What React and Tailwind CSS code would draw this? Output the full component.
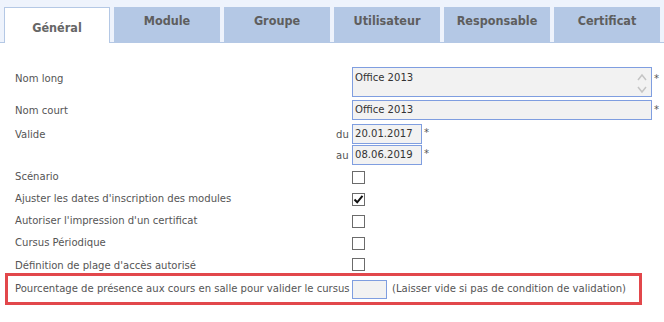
import React from 'react';

const TABS = ['Général', 'Module', 'Groupe', 'Utilisateur', 'Responsable', 'Certificat'];

const CHECKS = [
  { label: 'Scénario', checked: false },
  { label: "Ajuster les dates d'inscription des modules", checked: true },
  { label: "Autoriser l'impression d'un certificat", checked: false },
  { label: 'Cursus Périodique', checked: false },
];

const Checkbox = ({ checked }) => (
  <div className="w-[13px] h-[13px] border border-[#6b6b6b] bg-white flex items-center justify-center">
    {checked && (
      <svg width="11" height="11" viewBox="0 0 11 11">
        <path d="M1.5 5.5 L4.2 8.3 L9.5 1.8" fill="none" stroke="#111" strokeWidth="2" />
      </svg>
    )}
  </div>
);

const Star = () => <span className="ml-[2px] text-[#555] leading-none">*</span>;

export default function App() {
  return (
    <div className="w-[664px] h-[322px] bg-white text-[11.2px] text-[#555]" style={{ fontFamily: '"DejaVu Sans Condensed", "DejaVu Sans", sans-serif' }}>
      {/* Tabs */}
      <div className="h-[43px] bg-[#eef3fc] border-b border-[#b4c8e5] flex items-end gap-[4px] pl-[4px]">
        {TABS.map((t, i) =>
          i === 0 ? (
            <div key={t} className="w-[106px] h-[36px] -mb-px bg-white border border-b-0 border-[#b4c8e5] flex items-center justify-center pt-[6px] font-bold text-[12.5px] text-[#666]">
              {t}
            </div>
          ) : (
            <div key={t} className="w-[106px] h-[35px] bg-[#b4c8e5] flex justify-center pt-[5px] font-bold text-[12.5px] text-[#5e5e5e]">
              {t}
            </div>
          )
        )}
      </div>

      <div className="pl-[5px] pt-[24px]">
        {/* Nom long */}
        <div className="flex pl-[10px]">
          <div className="w-[337px] pt-[4px]">Nom long</div>
          <div className="w-[300px] h-[30px] border border-[#7f9ee0] bg-[#f2f2f2] flex justify-between pl-[2px] pt-[2px] text-[#333]">
            <span>Office 2013</span>
            <svg width="14" height="26" viewBox="0 0 14 26" className="-mt-[1px] mr-[2px]">
              <path d="M3 11 L7 6 L11 11" fill="none" stroke="#c4c4c4" strokeWidth="1.5" />
              <path d="M3 18 L7 23 L11 18" fill="none" stroke="#c4c4c4" strokeWidth="1.5" />
            </svg>
          </div>
          <div className="pt-[4px]"><Star /></div>
        </div>

        {/* Nom court */}
        <div className="flex items-center pl-[10px] mt-[3px]">
          <div className="w-[337px] pt-[3px]">Nom court</div>
          <div className="w-[300px] h-[20px] border border-[#7f9ee0] bg-[#f2f2f2] flex items-center pl-[2px] pt-[1px] text-[#333]">Office 2013</div>
          <Star />
        </div>

        {/* Valide */}
        <div className="flex pl-[10px] mt-[4px]">
          <div className="w-[321px] flex items-center pt-[3px]">Valide</div>
          <div className="w-[16px] flex items-center pt-[3px]">du</div>
          <div className="w-[70px] h-[20px] border border-[#7f9ee0] bg-[#f2f2f2] flex items-center pl-[2px] pt-[1px] text-[#333]">20.01.2017</div>
          <div className="pt-[1px]"><Star /></div>
        </div>
        <div className="flex pl-[10px] mt-[1px]">
          <div className="w-[321px]"></div>
          <div className="w-[16px] flex items-center pt-[3px]">au</div>
          <div className="w-[70px] h-[20px] border border-[#7f9ee0] bg-[#f2f2f2] flex items-center pl-[2px] pt-[1px] text-[#333]">08.06.2019</div>
          <div className="pt-[1px]"><Star /></div>
        </div>

        {/* Checkboxes */}
        <div className="mt-[1px]">
          {CHECKS.map((c) => (
            <div key={c.label} className="flex items-center h-[22px] pl-[10px]">
              <div className="w-[337px] pt-[1px]">{c.label}</div>
              <Checkbox checked={c.checked} />
            </div>
          ))}
          <div className="flex items-start h-[19px] pl-[10px] pt-[4px]">
            <div className="w-[337px]">Définition de plage d'accès autorisé</div>
            <Checkbox checked={false} />
          </div>
        </div>

        {/* Highlighted row */}
        <div className="w-[637px] h-[32px] border-[3px] border-[#e2474b] flex items-center pl-[7px]">
          <div className="w-[337px] pt-[1px]">Pourcentage de présence aux cours en salle pour valider le cursus</div>
          <div className="w-[35px] h-[19px] border border-[#7f9ee0] bg-[#f2f2f2]"></div>
          <div className="ml-[5px] pt-[1px]">(Laisser vide si pas de condition de validation)</div>
        </div>
      </div>
    </div>
  );
}
